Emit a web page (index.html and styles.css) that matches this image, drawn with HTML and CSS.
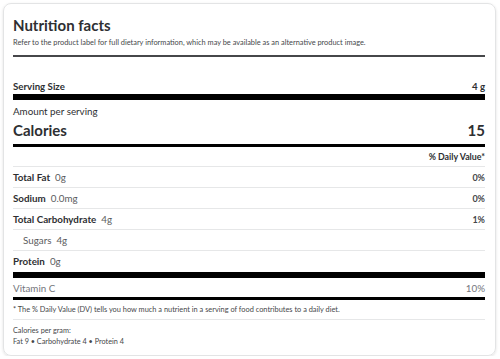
FILE: index.html
```html
<!DOCTYPE html>
<html lang="en">
<head>
<meta charset="utf-8">
<title>Nutrition facts</title>
<link rel="stylesheet" href="styles.css">
</head>
<body>
<div class="card">
  <h2 class="title">Nutrition facts</h2>
  <p class="note">Refer to the product label for full dietary information, which may be available as an alternative product image.</p>
  <div class="rule-top"></div>
  <div class="serving"><span>Serving Size</span><span>4 g</span></div>
  <div class="bar-thick"></div>
  <div class="amount">Amount per serving</div>
  <div class="calories"><span>Calories</span><span>15</span></div>
  <div class="bar-med"></div>
  <div class="dv-head">% Daily Value*</div>
  <div class="rows">
    <div class="row"><span><b>Total Fat</b><span class="qty">0g</span></span><span class="pct">0%</span></div>
    <div class="row"><span><b>Sodium</b><span class="qty">0.0mg</span></span><span class="pct">0%</span></div>
    <div class="row"><span><b>Total Carbohydrate</b><span class="qty">4g</span></span><span class="pct">1%</span></div>
    <div class="row sub"><span><span class="sublabel">Sugars</span><span class="qty">4g</span></span><span class="pct"></span></div>
    <div class="row"><span><b>Protein</b><span class="qty">0g</span></span><span class="pct"></span></div>
  </div>
  <div class="bar-thick vit-bar"></div>
  <div class="vit"><span>Vitamin C</span><span>10%</span></div>
  <div class="bar-med"></div>
  <p class="footnote">* The % Daily Value (DV) tells you how much a nutrient in a serving of food contributes to a daily diet.</p>
  <div class="per-gram">
    <div>Calories per gram:</div>
    <div>Fat 9 • Carbohydrate 4 • Protein 4</div>
  </div>
</div>
</body>
</html>
```

FILE: styles.css
```css
* { box-sizing: border-box; }
body {
  margin: 0;
  background: #ffffff;
  font-family: Lato, "Open Sans", sans-serif;
  color: #2e2f32;
}
.card {
  margin: 3px 4px 0 3px;
  height: 353px;
  border: 1px solid #e3e4e5;
  border-radius: 8px;
  box-shadow: 0 1px 3px rgba(0,0,0,0.12);
  padding: 8px 10px 7px 9px;
}
.title {
  margin: 0;
  font-size: 15px;
  line-height: 26px;
  font-weight: 700;
}
.note {
  margin: 0;
  font-size: 7.4px;
  line-height: 10px;
  color: #46474a;
}
.rule-top {
  margin-top: 7px;
  height: 2px;
  background: #46474a;
}
.serving {
  margin-top: 22px;
  display: flex;
  justify-content: space-between;
  font-size: 9.7px;
  line-height: 14px;
  font-weight: 700;
}
.bar-thick {
  margin-top: 1px;
  height: 6px;
  background: #000;
}
.amount {
  margin-top: 5px;
  font-size: 9.8px;
  line-height: 12px;
}
.calories {
  margin-top: 3px;
  display: flex;
  justify-content: space-between;
  font-size: 15px;
  line-height: 20px;
  font-weight: 700;
}
.cal-num { letter-spacing: -0.5px; }
.bar-med {
  margin-top: 4px;
  height: 3px;
  background: #000;
}
.dv-head {
  margin-top: 4px;
  text-align: right;
  font-size: 8.8px;
  line-height: 12px;
  font-weight: 700;
}
.rows { margin-top: 3px; }
.row {
  display: flex;
  justify-content: space-between;
  align-items: center;
  height: 21px;
  border-top: 1px solid #e6e7e8;
  font-size: 9.8px;
}
.row b { font-weight: 700; }
.qty {
  margin-left: 5px;
  color: #5b5c60;
}
.sub { padding-left: 10px; }
.sublabel { color: #5b5c60; }
.pct {
  font-weight: 700;
  color: #46474a;
  font-size: 9px;
}
.vit-bar { margin-top: 1px; }
.vit {
  height: 19px;
  display: flex;
  justify-content: space-between;
  align-items: center;
  font-size: 9.8px;
  color: #74767c;
}
.vit + .bar-med { margin-top: 0; }
.footnote {
  margin: 5px 0 0;
  font-size: 7.4px;
  line-height: 10px;
  color: #46474a;
  padding-bottom: 4px;
  border-bottom: 1px solid #e6e7e8;
}
.per-gram {
  padding-top: 5px;
  font-size: 7.3px;
  line-height: 11px;
  color: #46474a;
}
```
